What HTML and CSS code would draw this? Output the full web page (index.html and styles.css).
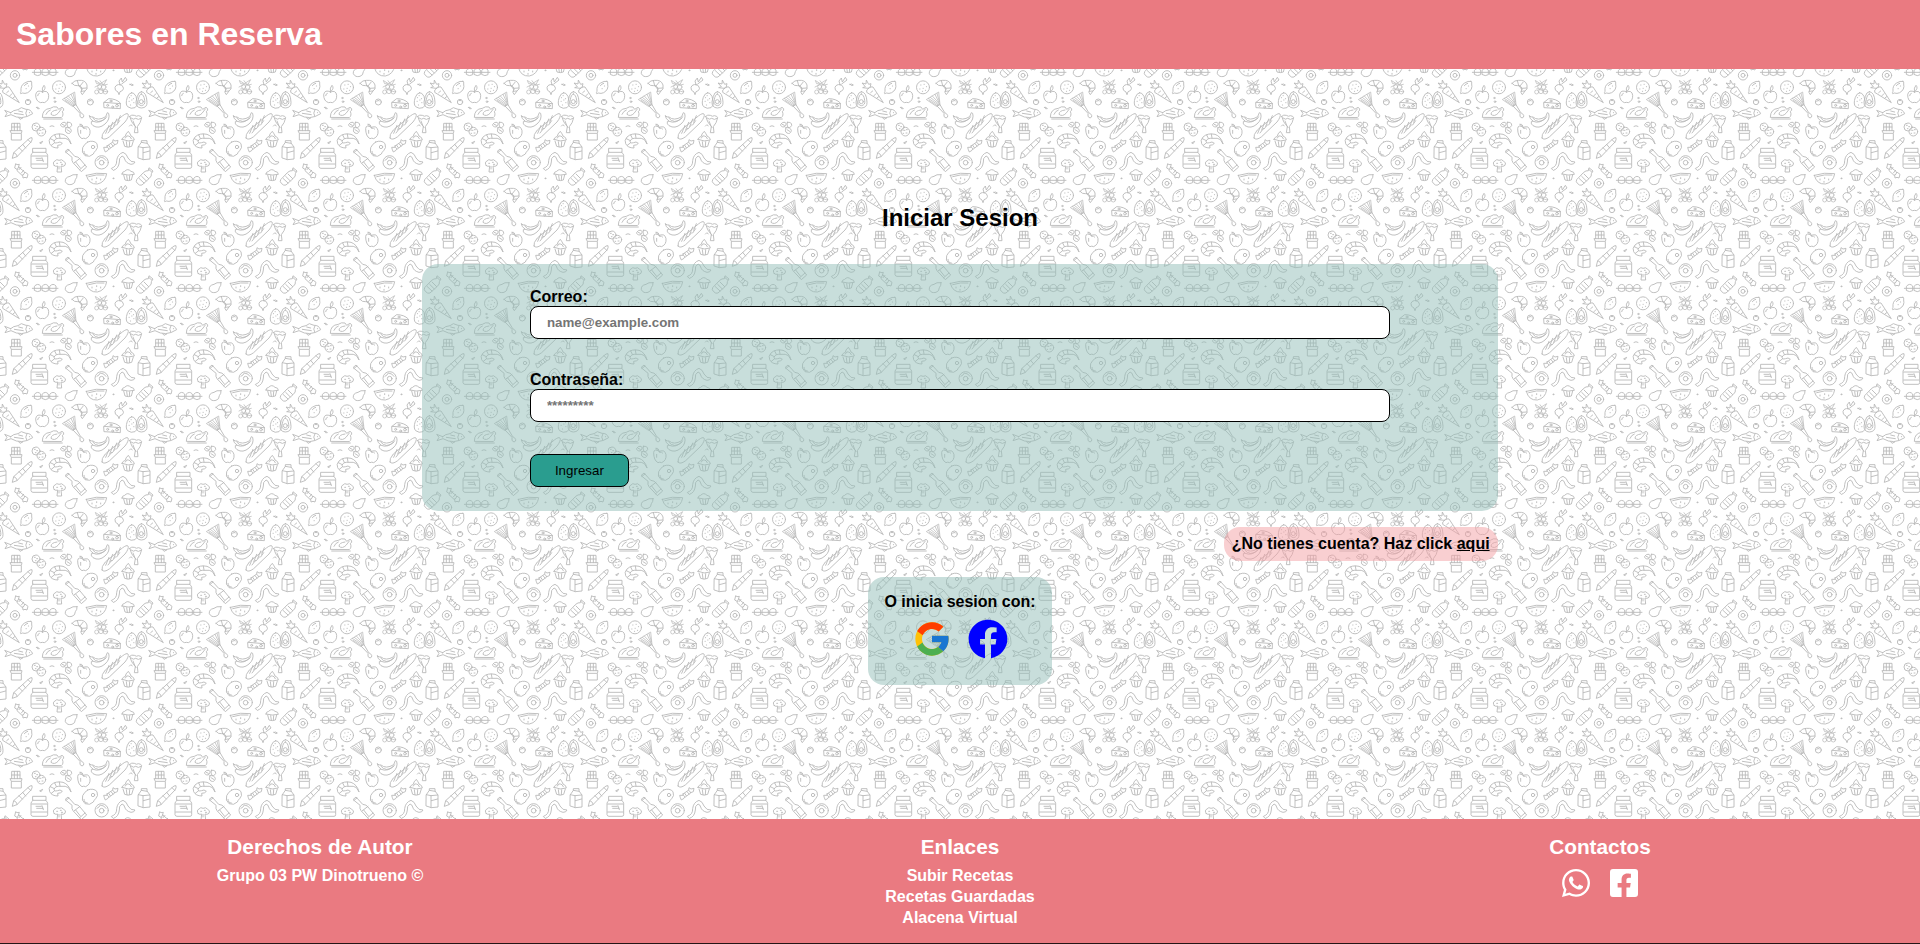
FILE: index.html
```
<!DOCTYPE html>
<html lang="es">
<head>
<meta charset="utf-8">
<title>Sabores en Reserva</title>
<link rel="stylesheet" href="styles.css">
</head>
<body>
<header class="header"><h1 class="brand">Sabores en Reserva</h1></header>
<main class="main">
  <svg class="wallpaper" aria-hidden="true">
    <defs>
      <g id="food">
        <!-- ring, egg tray, pear, watermelon -->
        <circle cx="45" cy="400" r="14"/><circle cx="45" cy="400" r="6"/>
        <path d="M97 391h77M104 384q9-10 18 0v14q-9 6-18 0zM127 384q9-10 18 0v14q-9 6-18 0zM150 384q9-10 18 0v14q-9 6-18 0z"/>
        <path d="M231 374q-14-2-21 5q-16 3-14 16q6 12 20 8q10-3 10-14q6-6 5-15z"/>
        <path d="M259 376q30-10 61-5q-4 26-28 31q-26 2-33-26zM266 380q24-8 46-5M276 387v3M290 383v3M302 387v3M288 394v3"/>
        <circle cx="340" cy="385" r="1.5"/>
        <!-- muffin and water bottle -->
        <path d="M366 372q0-7 8-8q9-10 19 0q10 1 10 9q-18 5-37-1zM371 375l4 15q10 4 19 0l4-15M380 377l2 13M389 377l-1 13"/>
        <path d="M448 354l11 9-5 8q2 7-6 14l-22 20q-7 3-13-4q-7-6-3-12l21-22q7-6 13-5zM446 358l9 8M432 372l14 14M425 379l14 14M418 386l14 13"/>
        <!-- carrot, lemon, apple, orange -->
        <path d="M13 115q-7 4-5 12l50 31-31-47q-6-3-14 4zM13 115l-17-2 8-3-10-11 12 3 1-12 7 13 7-2-3 12M20 128l6-5M30 137l6-6M39 144l5-4"/>
        <path d="M93 94q4 1 2 8q4 17-12 26q-8 4-16 1l-5 2q-2-3 1-7q-2-18 11-25q10-7 19-5zM73 107q5-6 10-7M78 116h1M85 108h1"/>
        <path d="M128 126q-18-9-21 8q0 20 15 24q5-2 11 0q14-6 13-22q-2-17-18-10zM127 126q-2-14 5-20q8 8-3 18M113 137q0-6 5-7"/>
        <circle cx="177" cy="112" r="19.500"/><path d="M170 105h1M180 103h1M187 110h1M177 115h1M167 117h1M184 121h1M175 124h1"/>
        <!-- croissant, grapes, radish -->
        <path d="M216 100q8-10 20-9q20-2 25 14q3 14-6 18l-8 11-4-6 3-14q-5-9-13-7q-10 2-17-7zM232 91l4 16M249 97l-9 11M260 114l-15 1M243 124l11-1M236 106l10 13"/>
        <g class="dense"><circle cx="290" cy="126" r="6"/><circle cx="303" cy="124" r="7"/><circle cx="316" cy="125" r="7"/><circle cx="299" cy="110" r="6"/><circle cx="311" cy="111" r="7"/><path d="M287 92l14 9 19-12-8 14-21-2zM285 111l14-7M300 92l10 14 12-3M291 116l30 10"/></g>
        <path d="M360 104q-11-2-15 8q-2 10 9 14l3 8 3-9q14-5 9-14q-2-7-9-7zM360 104l-3-11 7-9 3 12 9-14 5 8-16 12"/>
        <path d="M390 103q5-3 10 2q-3 5-10-2z"/><circle cx="84" cy="156" r="8"/><path d="M81 152q3-3 6 0"/><circle cx="163" cy="144" r="2"/><circle cx="165" cy="155" r="2.500"/>
        <!-- leek, nut, cheese, avocado -->
        <path class="dense" d="M188 148l36-22 4 38-9 5zM193 145l30 20M199 142l26 21M205 138l22 24M213 133l13 27M219 130l7 25M195 151l26 17"/>
        <path d="M219 168l21 22q-3 12 6 14q7-2 5-8q-4-7-9-8l-14-24z"/>
        <circle cx="271" cy="156" r="9"/><path d="M266 154q4-5 8-2"/>
        <path d="M312 157l14-11q22 0 35 13v17l-48-3zM312 157l49 4"/><circle cx="323" cy="166" r="3"/><circle cx="338" cy="171" r="3"/><circle cx="351" cy="167" r="4"/><circle cx="333" cy="153" r="3"/>
        <path d="M395 128q-9 2-13 14q-7 20 1 28q10 8 22 3q8-6 7-15l-4-19q-6-12-13-11zM388 143h1M393 137h1M387 154h1M395 150h1M401 158h1M391 165h1M400 146h1"/>
        <path d="M424 125q-9 1-12 14l-4 16q-1 18 16 19q18-1 17-17q-1-31-17-32zM424 132q-7 2-9 17q-5 15 9 18q13-2 10-16q-2-17-10-19z"/><circle cx="424" cy="155" r="6"/>
        <!-- fish and roast chicken -->
        <path d="M32 188l-18-7 7 9-6 10 18-6q32 19 65-3q-6-14-20-13l-14-5-10 6q-14 1-22 9zM80 181q-6 8 0 17M88 188h1M56 183l12 3M43 190l27 4M56 203l4 5 8-4"/>
        <path d="M110 172q4-3 8 4q-6 3-8-4z"/>
        <path d="M127 201q0-24 24-26q9-7 20-4l5 7 10-6q7 3 5 9l-4 3q5 13-2 18zM131 207h56M171 180q-18 2-18 13q10 8 21-3l10-13M138 193q4-10 13-13"/>
        <!-- banana, baguette, wrap -->
        <path d="M268 198q7 4 11 3q15 13 38-1l5-12 4 2q5 18-11 32q-18 16-36 5q-7-5-5-12l5-2q-10-6-11-15zM278 204q16 21 39 1M279 214q22 10 42-14"/>
        <path d="M306 264q-3-9 10-24l51-42q13-10 17-6q4 7-9 24l-46 44q-17 13-23 4zM317 250l10-24M329 240l9-23M341 229l9-22M353 217l8-20M324 249l11-14M336 237l11-13M350 225l9-13"/>
        <path d="M389 199q6-6 14-3 7 5 12 1 9 1 10 6-3 16-13 27l2 18h-11l3-18q-13-13-17-31zM393 204q8 7 14 1 8 7 16 0M399 213q5 15 9 20"/>
        <path d="M388 228q4-8 9-1"/>
        <!-- chocolate, cookies, nuts, pepper -->
        <path d="M35 242v-22h25v22M43 220v22M52 220v22M35 231h25M31 242h35l-2 9v19H34v-19zM35 250h27"/>
        <circle cx="108" cy="231" r="12"/><circle cx="124" cy="245" r="13"/><path d="M103 226h3M110 230h3M106 236h2M119 241h4M127 239h3M126 249h3M117 250h2"/>
        <path d="M150 229q6-4 12 0"/>
        <path d="M189 217q8-3 10 5l-6 9q-12 0-11-7zM202 217q14-2 13 10l-7 7q-9-3-6-17zM198 233q14-2 16 9-3 12-13 7-8-4-3-16zM201 239l8 5M187 223l6 3"/>
        <path d="M250 232q-16-10-17 4q0 23 13 30q5-3 11 0q15-7 13-24q-3-17-20-10zM249 232q-4-6-10-9q6-3 10 5M242 241v9M251 235q6-3 9 2"/>
        <!-- tube and shrimp -->
        <path d="M37 324l4-16 43-39q6-7 12-6q2 6-3 13l-41 43zM42 308q8 3 10 11M57 293l10 10M68 283l9 11M84 269l9 9"/>
        <path d="M213 281q-6-22-24-28q-22-5-36 8q-9 10-4 20q6 13 25 13l-1-8q10 0 14-6q-7-7-14-2q-9 4-11-3q2-12 21-10q14-2 21 3zM164 255l5 10M151 266l12 6M154 286l10-8M178 252l2 12"/>
        <path d="M120 278l8-4-4 6z"/>
        <!-- jar, broccoli, wine -->
        <path d="M99 295h39v12H99zM99 307q-6 4-6 9v34q1 5 6 5h39q5 0 5-5v-34q0-5-6-9M95 318h46M95 342h46M108 325h16M110 331h19M126 323l4 12"/>
        <path d="M163 347q-7-10 2-14q5-7 12-2q9-5 14 3q9 3 4 12-6 5-12 2l2 18h-14l2-18q-5 3-10-1zM170 340h3M181 337h3M184 343h4M177 349v8"/>
        <path d="M196 304l8-7 20 22q12 1 16 8l20 24-16 14-25-27q-5-6-3-15zM198 307l9-7M222 339l18-14M239 359l16-14M227 336l14 18"/>
        <!-- steak, candy, cupcake, milk -->
        <path d="M263 276q18-7 28 5q5 13-4 21q-5 4-7 10q-10 11-25 5q-12-10-7-24q5-11 15-17z"/><circle cx="279" cy="291" r="5"/><path d="M252 304q0 11 10 11"/>
        <path d="M321 288l16-11q6 2 7 8l-16 12q-7-3-7-9zM320 292l-9 0 2 7 3 7 8-5 2-4M338 276l1-7 6 4 9-2-2 10-8 3M326 286l5 7M333 281l6 7"/>
        <path d="M366 268q3-8 10-9 0-7 9-15 6 8 8 14 10 4 10 12-18 7-37-2zM376 264q4-10 9-6 6 0 9 8M369 273l5 16q10 5 21 0l5-16M379 275l2 15M389 275l-1 15"/>
        <path d="M415 290l9-13v-5h17v7l9 12v36l-20 2-15-5zM415 290l14 3 20-2M429 293v36M424 277l17 3M430 308l19-5"/>
        <!-- bacon, doughnut, candy -->
        <path d="M335 355q16-6 15-23q2-19 19-25 11 4 15 17 8 14 21 12-2 7-12 7-16-4-19-16-2-8-8-9-10 6-8 18-2 20-17 25z"/>
        <circle cx="305" cy="337" r="20"/><circle cx="305" cy="338" r="7"/><path d="M291 331q8-4 10-10 12 1 17 10"/>
        <path d="M57 352l17 14q0 8-8 10l-15-14q-1-8 6-10zM55 352l3-9-7 1-4-3-3 13 7 4M68 376l1 8 6-2 6 2 3-11-8-6M57 359l6-7M64 369l7-8"/>
      </g>
      <pattern id="tile" width="432" height="324" patternUnits="userSpaceOnUse" patternTransform="translate(0 -19) scale(.333333)">
        <use href="#food"/><use href="#food" x="-432"/><use href="#food" x="432"/>
        <use href="#food" y="-324"/><use href="#food" x="-432" y="-324"/><use href="#food" x="432" y="-324"/>
      </pattern>
    </defs>
    <rect class="wallpaper-fill" width="100%" height="100%" fill="url(#tile)"/>
  </svg>
  <section class="login">
    <h2 class="title">Iniciar Sesion</h2>
    <form class="card">
      <label class="field">Correo:<input class="input" type="email" placeholder="name@example.com"></label>
      <label class="field">Contraseña:<input class="input" type="password" placeholder="*********"></label>
      <button class="submit" type="button">Ingresar</button>
    </form>
    <p class="signup">¿No tienes cuenta? Haz click <a class="signup-link" href="#">aqui</a></p>
    <div class="social">
      <p class="social-title">O inicia sesion con:</p>
      <div class="icons">
        <svg class="icon-lg" viewBox="0 0 48 48"><path fill="#FFC107" d="M43.611 20.083H42V20H24v8h11.303c-1.649 4.657-6.080 8-11.303 8-6.627 0-12-5.373-12-12s5.373-12 12-12c3.059 0 5.842 1.154 7.961 3.039l5.657-5.657C34.046 6.053 29.268 4 24 4 12.955 4 4 12.955 4 24s8.955 20 20 20 20-8.955 20-20c0-1.341-.138-2.650-.389-3.917z"/><path fill="#FF3D00" d="M6.306 14.691l6.571 4.819C14.655 15.108 18.961 12 24 12c3.059 0 5.842 1.154 7.961 3.039l5.657-5.657C34.046 6.053 29.268 4 24 4 16.318 4 9.656 8.337 6.306 14.691z"/><path fill="#4CAF50" d="M24 44c5.166 0 9.860-1.977 13.409-5.192l-6.190-5.238C29.211 35.091 26.715 36 24 36c-5.202 0-9.619-3.317-11.283-7.946l-6.522 5.025C9.505 39.556 16.227 44 24 44z"/><path fill="#1976D2" d="M43.611 20.083H42V20H24v8h11.303c-.792 2.237-2.231 4.166-4.087 5.571l6.193 5.238C36.971 39.205 44 34 44 24c0-1.341-.138-2.650-.389-3.917z"/></svg>
        <svg class="icon-lg" viewBox="0 0 512 512"><path fill="#00f" d="M504 256C504 119 393 8 256 8S8 119 8 256c0 123.780 90.690 226.380 209.250 245V327.690h-63V256h63v-54.640c0-62.150 37-96.480 93.670-96.480 27.140 0 55.520 4.840 55.520 4.840v61h-31.280c-30.800 0-40.410 19.120-40.410 38.730V256h68.780l-11 71.690h-57.780V501C413.310 479.620 504 379.780 504 256z"/></svg>
      </div>
    </div>
  </section>
</main>
<footer class="footer">
  <div class="column"><h3 class="column-title">Derechos de Autor</h3><p class="line">Grupo 03 PW Dinotrueno ©</p></div>
  <div class="column"><h3 class="column-title">Enlaces</h3><p class="line">Subir Recetas</p><p class="line">Recetas Guardadas</p><p class="line">Alacena Virtual</p></div>
  <div class="column"><h3 class="column-title">Contactos</h3>
    <div class="icons">
      <svg class="icon" viewBox="0 0 448 512"><path d="M380.900 97.100C339 55.100 283.200 32 223.900 32c-122.400 0-222 99.600-222 222 0 39.100 10.200 77.300 29.600 111L0 480l117.700-30.900c32.400 17.700 68.900 27 106.100 27h.1c122.300 0 224.100-99.600 224.100-222 0-59.300-25.200-115-67.100-157zm-157 341.600c-33.200 0-65.700-8.900-94-25.700l-6.700-4-69.800 18.300L72 359.200l-4.400-7c-18.500-29.400-28.200-63.300-28.200-98.200 0-101.700 82.800-184.500 184.600-184.500 49.300 0 95.600 19.200 130.400 54.100 34.800 34.900 56.200 81.200 56.100 130.500 0 101.800-84.900 184.600-186.600 184.600zm101.200-138.200c-5.500-2.800-32.800-16.200-37.900-18-5.100-1.900-8.800-2.800-12.500 2.800-3.700 5.600-14.300 18-17.600 21.800-3.200 3.700-6.500 4.200-12 1.400-32.600-16.300-54-29.100-75.500-66-5.700-9.800 5.700-9.100 16.300-30.300 1.800-3.700.9-6.900-.5-9.700-1.400-2.800-12.500-30.100-17.100-41.200-4.500-10.800-9.100-9.300-12.500-9.500-3.200-.2-6.900-.2-10.600-.2-3.700 0-9.700 1.400-14.800 6.900-5.100 5.600-19.400 19-19.400 46.300 0 27.300 19.900 53.700 22.600 57.400 2.800 3.700 39.100 59.700 94.800 83.800 35.200 15.200 49 16.500 66.600 13.900 10.700-1.600 32.800-13.400 37.400-26.400 4.600-13 4.600-24.100 3.200-26.400-1.300-2.500-5-3.900-10.500-6.600z"/></svg>
      <svg class="icon" viewBox="0 0 448 512"><path d="M400 32H48A48 48 0 0 0 0 80v352a48 48 0 0 0 48 48h137.250V327.690h-63V256h63v-54.640c0-62.150 37-96.480 93.670-96.480 27.140 0 55.520 4.840 55.520 4.840v61h-31.270c-30.810 0-40.420 19.120-40.420 38.730V256h68.780l-11 71.690h-57.780V480H400a48 48 0 0 0 48-48V80a48 48 0 0 0-48-48z"/></svg>
    </div>
  </div>
</footer>
</body>
</html>
```
FILE: styles.css
```
* { box-sizing: border-box; margin: 0; padding: 0; }
body {
  display: flex;
  flex-direction: column;
  height: 944px;
  overflow: hidden;
  background: #fff;
  color: #000;
  font: bold 16px/18px "Liberation Sans", Arial, sans-serif;
}
.header { padding: 16px; background: #ea7a81; color: #fff; }
.brand { font-size: 32px; line-height: 37px; }
.main { position: relative; flex: 1; display: flex; justify-content: center; padding-top: 135px; }
.wallpaper {
  position: absolute;
  inset: 0;
  width: 100%;
  height: 100%;
  fill: none;
  stroke: #b9b9b9;
  stroke-width: 2.7;
  stroke-linejoin: round;
  stroke-linecap: round;
}
.wallpaper-fill { stroke: none; }
.dense { stroke-width: 2.2; }
.login { position: relative; width: 56%; display: flex; flex-direction: column; align-items: center; gap: 16px; }
.title { font-size: 24px; line-height: 27px; margin-bottom: 17px; }
.card {
  display: flex;
  flex-direction: column;
  align-items: flex-start;
  gap: 32px;
  width: 100%;
  padding: 24px 10%;
  border-radius: 16px;
  background: rgba(145, 189, 184, .5);
}
.field { display: flex; flex-direction: column; width: 100%; }
.input {
  height: 33px;
  padding: 8px 16px;
  border: 1px solid #000;
  border-radius: 8px;
  background: #fff;
  font: bold 13.333px "Liberation Sans", Arial, sans-serif;
}
.input::placeholder { color: #757575; }
.submit {
  height: 33px;
  padding: 8px 24px;
  border: 1px solid #000;
  border-radius: 8px;
  background: #2a9d8f;
  color: #000;
  font: 13.333px "Liberation Sans", Arial, sans-serif;
}
.signup { align-self: flex-end; padding: 8px; border-radius: 16px; background: rgba(243, 160, 163, .5); }
.signup-link { color: #000; }
.social { height: 108px; padding: 16px; border-radius: 16px; background: rgba(145, 189, 184, .5); }
.icons { display: flex; justify-content: center; gap: 16px; margin-top: 8px; }
.icon-lg { width: 40px; height: 40px; }
.footer {
  display: grid;
  grid-template-columns: repeat(3, 1fr);
  height: 125px;
  padding-top: 16px;
  border-bottom: 1px solid #261416;
  background: #ea7a81;
  color: #fff;
  text-align: center;
}
.column-title { margin-bottom: 8px; font-size: 20.8px; line-height: 24px; }
.line { line-height: 18px; margin-bottom: 3px; }
.icon { width: 32px; height: 32px; fill: #fff; }
.footer .icons { margin-top: 0; }
.footer .icon { stroke: none; }
```
